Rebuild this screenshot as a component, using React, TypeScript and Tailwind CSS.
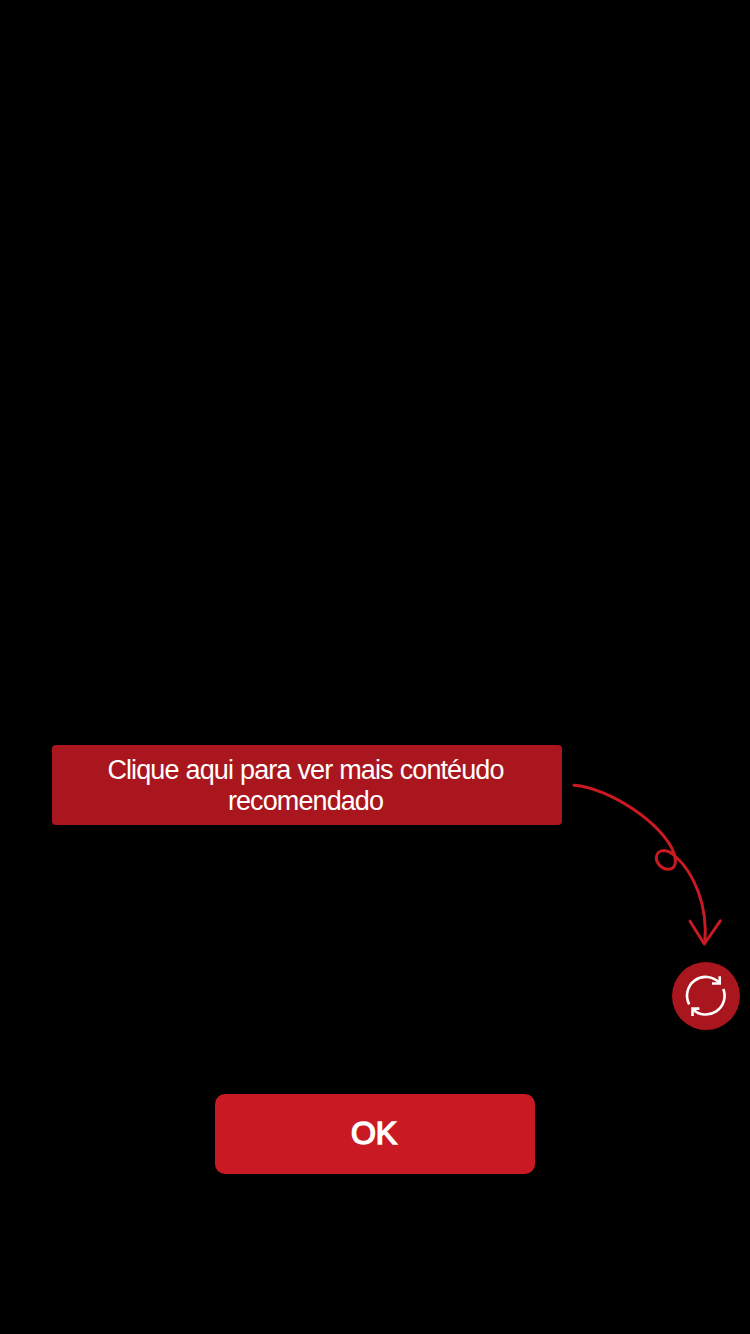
function CurlyArrow() {
  return (
    <svg
      className="block h-[217px] w-[188px]"
      viewBox="0 0 188 217"
      fill="none"
      stroke="#c91a23"
      strokeWidth="3"
      strokeLinecap="round"
      strokeLinejoin="round"
      aria-hidden="true"
    >
      <path d="M12 40.2C46 42.500 102 78.500 112.300 109C113.500 113 113.800 115 113.200 118.500C112.200 123 109.500 124.500 106 124.300C100 124 94.300 118.500 94.300 112.800C94.300 108.500 97.500 105.400 102 105.400C106 105.500 110 108 113.500 111.500C131 127 146.500 160 142.700 198" />
      <path d="M128 176.200L142.300 199L158.300 175.800" />
    </svg>
  );
}

function RefreshIcon() {
  return (
    <svg
      className="size-[68px]"
      viewBox="0 0 68 68"
      fill="none"
      stroke="#ffffff"
      strokeWidth="2.600"
      aria-hidden="true"
    >
      <path d="M17.200 42.300A18.700 18.700 0 0 1 47.300 20.700" />
      <path d="M47.700 14.200V21.500H40" />
      <path d="M51.300 27A18.700 18.700 0 0 1 20.800 47.200" />
      <path d="M27.400 46.600H20.500V54" />
    </svg>
  );
}

export default function App() {
  return (
    <main className="flex h-[1334px] w-[750px] flex-col overflow-hidden bg-black pt-[745px] font-['Liberation_Sans',Arial,sans-serif] text-white">
      <div className="flex items-start pl-[52px]">
        <p className="flex h-20 w-[510px] flex-col items-center justify-center rounded bg-[#aa161e] pt-0.5 pr-[3px] text-center text-[27px] leading-[31px] tracking-[-0.9px] whitespace-nowrap [word-spacing:0.4px]">
          <span>Clique aqui para ver mais contéudo</span>
          <span>recomendado</span>
        </p>
        <div className="flex w-[188px] flex-col">
          <CurlyArrow />
          <button
            type="button"
            aria-label="Atualizar"
            className="ml-[110px] size-[68px] rounded-full bg-[#aa161e]"
          >
            <RefreshIcon />
          </button>
        </div>
      </div>
      <button
        type="button"
        className="mt-16 flex h-20 w-80 items-center justify-center self-center rounded-[10px] bg-[#c91a23] pr-0.5 pb-0.5 text-[32px] leading-none [-webkit-text-stroke:1.5px_white]"
      >
        OK
      </button>
    </main>
  );
}
